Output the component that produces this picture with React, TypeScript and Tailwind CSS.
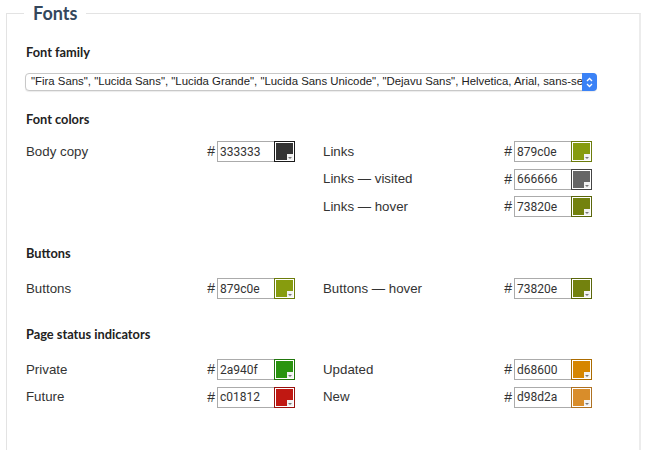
import React from "react";

type ColorRow = {
  label: string;
  value: string;
  border: string;
};

const Swatch = ({ value, border }: { value: string; border: string }) => (
  <div
    className="relative w-[21px] h-[21px] bg-white p-[1px] border"
    style={{ borderColor: border }}
  >
    <div className="w-full h-full" style={{ backgroundColor: "#" + value }} />
    <div className="absolute right-[1px] bottom-[1px] w-[6px] h-[6px] bg-[#f2f2f2] flex items-end justify-end">
      <div className="w-0 h-0 mr-[1px] mb-[1px] border-l-[2px] border-r-[2px] border-t-[2px] border-l-transparent border-r-transparent border-t-[#777]" />
    </div>
  </div>
);

const ColorField = ({ row }: { row: ColorRow }) => (
  <div className="flex items-center justify-between h-[21px]">
    <span className="text-[13.3px] text-[#333] font-['Liberation_Sans',Arial,sans-serif]">
      {row.label}
    </span>
    <div className="flex items-center">
      <span className="text-[14px] text-[#333] mr-[2px] font-['Liberation_Sans',Arial,sans-serif]">
        #
      </span>
      <div className="w-[57px] h-[21px] border border-r-0 border-[#ababab] bg-white pl-[2px] flex items-center text-[12px] text-[#333] font-['Liberation_Sans_Narrow',Roboto,sans-serif]">
        {row.value}
      </div>
      <Swatch value={row.value} border={row.border} />
    </div>
  </div>
);

const Heading = ({ children, className = "" }: { children: React.ReactNode; className?: string }) => (
  <h3 className={"text-[12.8px] leading-[16px] font-bold text-[#222] font-['Lato',sans-serif] " + className}>
    {children}
  </h3>
);

const ColorGrid = ({ left, right, className = "" }: { left: ColorRow[]; right: ColorRow[]; className?: string }) => (
  <div className={"grid grid-cols-2 gap-x-[28px] pr-[5px] " + className}>
    <div className="flex flex-col gap-[6.5px]">
      {left.map((r) => (
        <ColorField key={r.label} row={r} />
      ))}
    </div>
    <div className="flex flex-col gap-[6.5px]">
      {right.map((r) => (
        <ColorField key={r.label} row={r} />
      ))}
    </div>
  </div>
);

export default function App() {
  const fontStack =
    '"Fira Sans", "Lucida Sans", "Lucida Grande", "Lucida Sans Unicode", "Dejavu Sans", Helvetica, Arial, sans-serif';

  return (
    <div className="w-[650px] h-[450px] bg-white overflow-hidden">
      <fieldset className="min-w-0 ml-[6px] mr-[9px] border border-[#e3e3e3] border-r-2 border-r-[#ececec] pl-[19px] pr-[42px] pb-[60px]">
        <legend className="-ml-[2px] px-[9px] text-[18px] leading-[26px] font-bold text-[#34475c] font-['Lato',sans-serif]">
          Fonts
        </legend>

        {/* Font family */}
        <Heading className="mt-[18px]">Font family</Heading>
        <div className="mt-[13px] h-[18px] flex items-center border border-[#c8c8c8] rounded-[4px] bg-white shadow-[0_1px_1px_rgba(0,0,0,0.08)] -ml-[1px]">
          <div className="flex-1 min-w-0 overflow-hidden whitespace-nowrap pl-[5px] text-[11.4px] text-[#222] font-['Liberation_Sans',Arial,sans-serif]">
            {fontStack}
          </div>
          <div className="shrink-0 w-[15px] h-[18px] -mr-[1px] rounded-r-[4px] bg-[#3b82f6] flex items-center justify-center">
            <svg width="7" height="11" viewBox="0 0 7 11" fill="none" stroke="white" strokeWidth="1.3">
              <path d="M1 4 L3.5 1.5 L6 4" />
              <path d="M1 7 L3.5 9.5 L6 7" />
            </svg>
          </div>
        </div>

        {/* Font colors */}
        <Heading className="mt-[20px]">Font colors</Heading>
        <ColorGrid
          className="mt-[14px]"
          left={[{ label: "Body copy", value: "333333", border: "#1a1a1a" }]}
          right={[
            { label: "Links", value: "879c0e", border: "#6c7c0b" },
            { label: "Links — visited", value: "666666", border: "#444444" },
            { label: "Links — hover", value: "73820e", border: "#5a660b" },
          ]}
        />

        {/* Buttons */}
        <Heading className="mt-[28px]">Buttons</Heading>
        <ColorGrid
          className="mt-[17px]"
          left={[{ label: "Buttons", value: "879c0e", border: "#6c7c0b" }]}
          right={[{ label: "Buttons — hover", value: "73820e", border: "#5a660b" }]}
        />

        {/* Page status indicators */}
        <Heading className="mt-[27px]">Page status indicators</Heading>
        <ColorGrid
          className="mt-[17px]"
          left={[
            { label: "Private", value: "2a940f", border: "#21760c" },
            { label: "Future", value: "c01812", border: "#99130e" },
          ]}
          right={[
            { label: "Updated", value: "d68600", border: "#ab6b00" },
            { label: "New", value: "d98d2a", border: "#ae7122" },
          ]}
        />
      </fieldset>
    </div>
  );
}
